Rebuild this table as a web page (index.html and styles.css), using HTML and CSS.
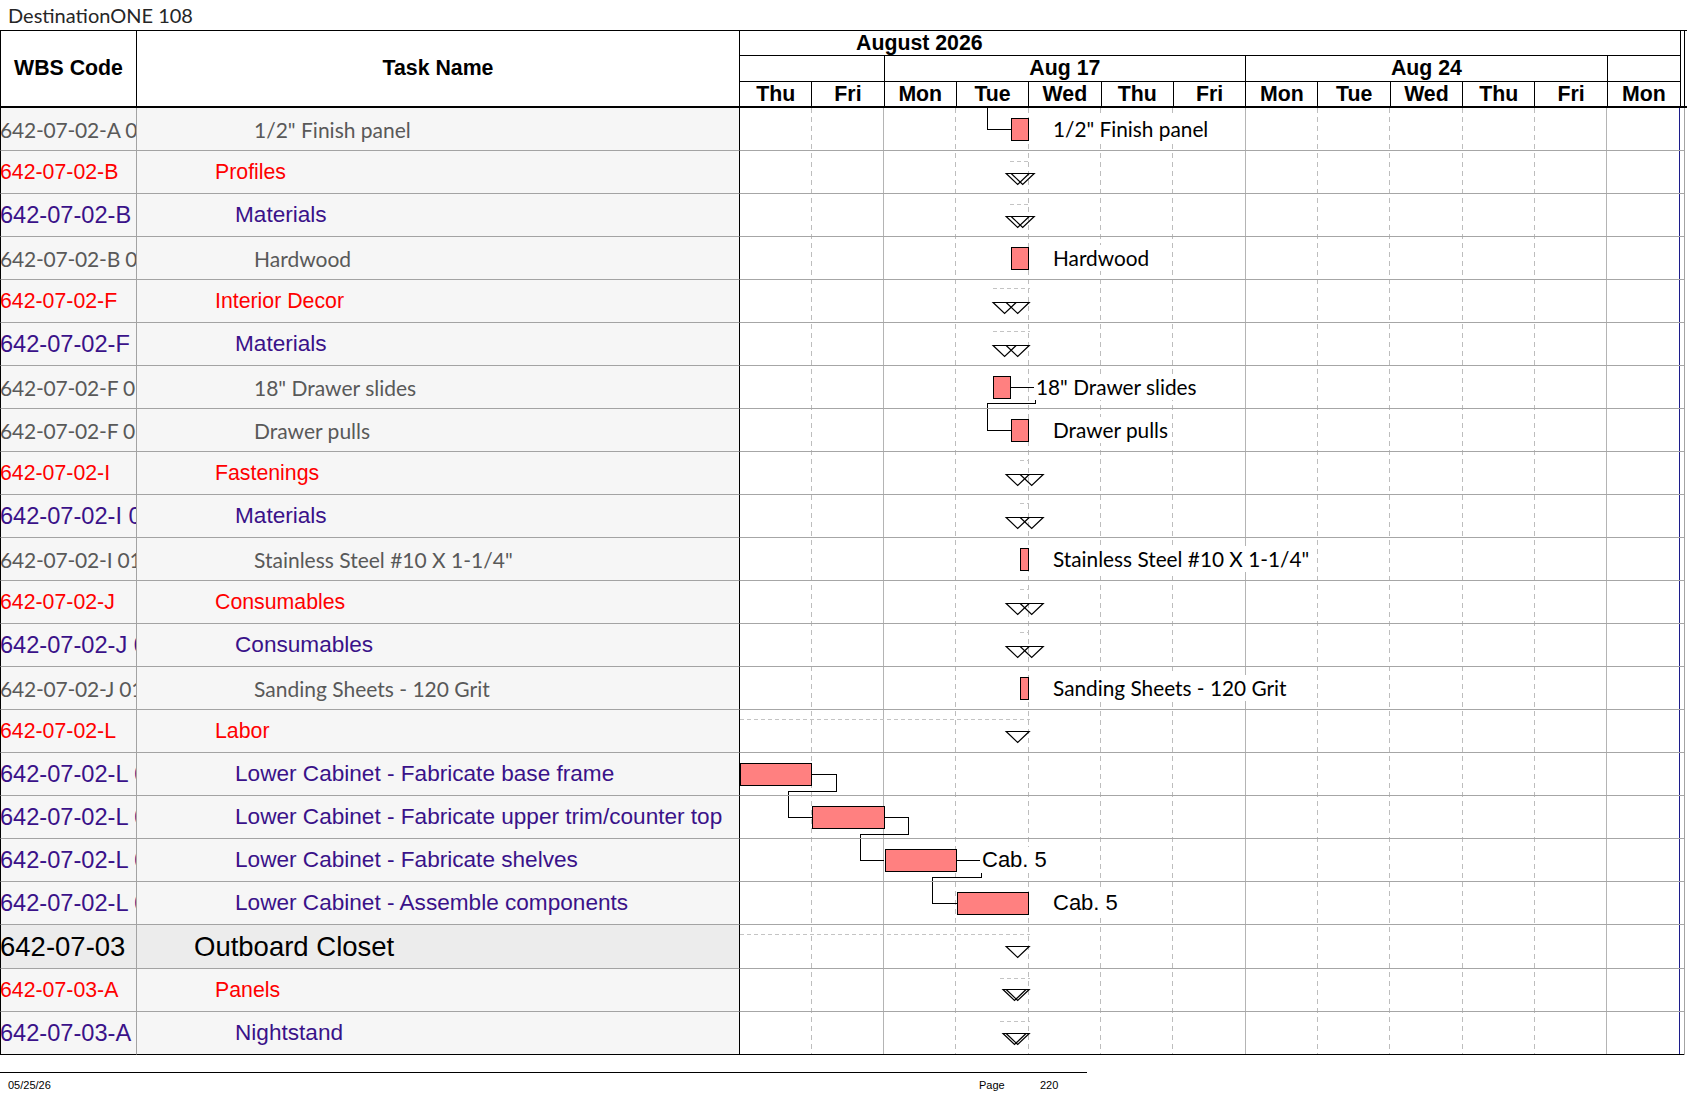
FILE: index.html
```html
<!DOCTYPE html>
<html>
<head>
<meta charset="utf-8">
<title>DestinationONE 108</title>
<link rel="stylesheet" href="styles.css">
</head>
<body>
<div class="title">DestinationONE 108</div>

<div class="head">
  <div class="h-wbs">WBS Code</div>
  <div class="h-task">Task Name</div>
  <div class="h-chart">
    <div class="h-month">August 2026</div>
    <div class="h-weeks">
      <div></div><div>Aug 17</div><div>Aug 24</div><div></div>
    </div>
    <div class="h-days">
      <div>Thu</div><div>Fri</div><div>Mon</div><div>Tue</div><div>Wed</div><div>Thu</div><div>Fri</div><div>Mon</div><div>Tue</div><div>Wed</div><div>Thu</div><div>Fri</div><div>Mon</div>
    </div>
  </div>
  <div class="h-gap"></div>
</div>

<div class="body">
  <div class="tbl">
    <div class="row leaf"><div class="wbs">642-07-02-A 01 01</div><div class="task">1/2" Finish panel</div></div>
    <div class="row l3"><div class="wbs">642-07-02-B</div><div class="task">Profiles</div></div>
    <div class="row l4"><div class="wbs">642-07-02-B 01</div><div class="task">Materials</div></div>
    <div class="row leaf"><div class="wbs">642-07-02-B 01 01</div><div class="task">Hardwood</div></div>
    <div class="row l3"><div class="wbs">642-07-02-F</div><div class="task">Interior Decor</div></div>
    <div class="row l4"><div class="wbs">642-07-02-F 01</div><div class="task">Materials</div></div>
    <div class="row leaf"><div class="wbs">642-07-02-F 01 01</div><div class="task">18" Drawer slides</div></div>
    <div class="row leaf"><div class="wbs">642-07-02-F 01 02</div><div class="task">Drawer pulls</div></div>
    <div class="row l3"><div class="wbs">642-07-02-I</div><div class="task">Fastenings</div></div>
    <div class="row l4"><div class="wbs">642-07-02-I 01</div><div class="task">Materials</div></div>
    <div class="row leaf"><div class="wbs">642-07-02-I 01 01</div><div class="task">Stainless Steel #10 X 1-1/4"</div></div>
    <div class="row l3"><div class="wbs">642-07-02-J</div><div class="task">Consumables</div></div>
    <div class="row l4"><div class="wbs">642-07-02-J 01</div><div class="task">Consumables</div></div>
    <div class="row leaf"><div class="wbs">642-07-02-J 01 01</div><div class="task">Sanding Sheets - 120 Grit</div></div>
    <div class="row l3"><div class="wbs">642-07-02-L</div><div class="task">Labor</div></div>
    <div class="row l4"><div class="wbs">642-07-02-L 01</div><div class="task">Lower Cabinet - Fabricate base frame</div></div>
    <div class="row l4"><div class="wbs">642-07-02-L 02</div><div class="task">Lower Cabinet - Fabricate upper trim/counter top</div></div>
    <div class="row l4"><div class="wbs">642-07-02-L 03</div><div class="task">Lower Cabinet - Fabricate shelves</div></div>
    <div class="row l4"><div class="wbs">642-07-02-L 04</div><div class="task">Lower Cabinet - Assemble components</div></div>
    <div class="row l2"><div class="wbs">642-07-03</div><div class="task">Outboard Closet</div></div>
    <div class="row l3"><div class="wbs">642-07-03-A</div><div class="task">Panels</div></div>
    <div class="row l4 last"><div class="wbs">642-07-03-A 01</div><div class="task">Nightstand</div></div>
  </div>

  <div class="chart">
    <svg class="canvas" width="944" height="947" viewBox="0 0 944 947" shape-rendering="crispEdges">
      <g class="grid-dash">
        <line x1="71.5" y1="0" x2="71.5" y2="947"/>
        <line x1="215.5" y1="0" x2="215.5" y2="947"/>
        <line x1="288.5" y1="0" x2="288.5" y2="947"/>
        <line x1="360.5" y1="0" x2="360.5" y2="947"/>
        <line x1="432.5" y1="0" x2="432.5" y2="947"/>
        <line x1="577.5" y1="0" x2="577.5" y2="947"/>
        <line x1="649.5" y1="0" x2="649.5" y2="947"/>
        <line x1="722.5" y1="0" x2="722.5" y2="947"/>
        <line x1="794.5" y1="0" x2="794.5" y2="947"/>
      </g>
      <g class="grid-week">
        <line x1="143.5" y1="0" x2="143.5" y2="947"/>
        <line x1="505.5" y1="0" x2="505.5" y2="947"/>
        <line x1="866.5" y1="0" x2="866.5" y2="947"/>
      </g>
      <line class="edge" x1="939.5" y1="0" x2="939.5" y2="947"/>

      <g class="sumline">
        <line x1="270" y1="53.5" x2="290" y2="53.5"/>
        <line x1="270" y1="96.5" x2="290" y2="96.5"/>
        <line x1="253" y1="180.5" x2="290" y2="180.5"/>
        <line x1="253" y1="223.5" x2="290" y2="223.5"/>
        <line x1="280" y1="352.5" x2="289" y2="352.5"/>
        <line x1="280" y1="395.5" x2="289" y2="395.5"/>
        <line x1="280" y1="481.5" x2="289" y2="481.5"/>
        <line x1="280" y1="524.5" x2="289" y2="524.5"/>
        <line x1="0" y1="611.5" x2="290" y2="611.5"/>
        <line x1="0" y1="826.5" x2="290" y2="826.5"/>
        <line x1="260" y1="870.5" x2="290" y2="870.5"/>
        <line x1="260" y1="913.5" x2="290" y2="913.5"/>
      </g>

      <g class="tri" shape-rendering="geometricPrecision">
        <polygon points="271.2,65.5 294.2,65.5 282.7,76.5"/>
        <polygon points="266.2,65.5 289.2,65.5 277.7,76.5"/>
        <polygon points="271.2,108.5 294.2,108.5 282.7,119.5"/>
        <polygon points="266.2,108.5 289.2,108.5 277.7,119.5"/>
        <polygon points="253.1,194.5 276.1,194.5 264.6,205.5"/>
        <polygon points="266.2,194.5 289.2,194.5 277.7,205.5"/>
        <polygon points="253.1,237.5 276.1,237.5 264.6,248.5"/>
        <polygon points="266.2,237.5 289.2,237.5 277.7,248.5"/>
        <polygon points="280.2,366.5 303.2,366.5 291.7,377.5"/>
        <polygon points="266.2,366.5 289.2,366.5 277.7,377.5"/>
        <polygon points="280.2,409.5 303.2,409.5 291.7,420.5"/>
        <polygon points="266.2,409.5 289.2,409.5 277.7,420.5"/>
        <polygon points="280.2,495.5 303.2,495.5 291.7,506.5"/>
        <polygon points="266.2,495.5 289.2,495.5 277.7,506.5"/>
        <polygon points="280.2,538.5 303.2,538.5 291.7,549.5"/>
        <polygon points="266.2,538.5 289.2,538.5 277.7,549.5"/>
        <polygon points="266.2,623.5 289.2,623.5 277.7,634.5"/>
        <polygon points="266.2,838.5 289.2,838.5 277.7,849.5"/>
        <polygon points="263,881.5 286,881.5 274.5,892.5"/>
        <polygon points="266.2,881.5 289.2,881.5 277.7,892.5"/>
        <polygon points="263,925.5 286,925.5 274.5,936.5"/>
        <polygon points="266.2,925.5 289.2,925.5 277.7,936.5"/>
      </g>

      <g class="link">
        <path d="M247.5,0 V21.5 H271"/>
        <path d="M271,279.5 H295.5 V295.5 H247.5 V322.5 H271"/>
        <path d="M72,666.5 H96.5 V683.5 H48.5 V709.5 H72"/>
        <path d="M144,709.5 H168.5 V726.5 H120.5 V752.5 H144"/>
        <path d="M216,752.5 H241.5 V769.5 H192.5 V795.5 H217"/>
      </g>
    </svg>

    <div class="crow"><div class="bar" style="left:271.2px;width:18px"></div><div class="lbl" style="left:311px">1/2" Finish panel</div></div>
    <div class="crow"></div>
    <div class="crow"></div>
    <div class="crow"><div class="bar" style="left:271.2px;width:18px"></div><div class="lbl" style="left:311px">Hardwood</div></div>
    <div class="crow"></div>
    <div class="crow"></div>
    <div class="crow"><div class="bar" style="left:253.1px;width:18.1px"></div><div class="lbl" style="left:294px">18" Drawer slides</div></div>
    <div class="crow"><div class="bar" style="left:271.2px;width:18px"></div><div class="lbl" style="left:311px">Drawer pulls</div></div>
    <div class="crow"></div>
    <div class="crow"></div>
    <div class="crow"><div class="bar" style="left:280.2px;width:9px"></div><div class="lbl" style="left:311px">Stainless Steel #10 X 1-1/4"</div></div>
    <div class="crow"></div>
    <div class="crow"></div>
    <div class="crow"><div class="bar" style="left:280.2px;width:9px"></div><div class="lbl" style="left:311px">Sanding Sheets - 120 Grit</div></div>
    <div class="crow"></div>
    <div class="crow"><div class="bar" style="left:0px;width:72.3px"></div></div>
    <div class="crow"><div class="bar" style="left:72.3px;width:72.3px"></div></div>
    <div class="crow"><div class="bar" style="left:144.6px;width:72.3px"></div><div class="lbl arial" style="left:240px">Cab. 5</div></div>
    <div class="crow"><div class="bar" style="left:216.9px;width:72.3px"></div><div class="lbl arial" style="left:311px">Cab. 5</div></div>
    <div class="crow big"></div>
    <div class="crow"></div>
    <div class="crow last"></div>
  </div>
</div>

<div class="footer">
  <span class="f-date">05/25/26</span>
  <span class="f-page">Page</span>
  <span class="f-num">220</span>
</div>
</body>
</html>
```

FILE: styles.css
```css
* { box-sizing: border-box; }

html, body {
  margin: 0;
  padding: 0;
  background: #fff;
}

body {
  width: 1687px;
  height: 1097px;
  overflow: hidden;
  font-family: "Liberation Sans", Arial, sans-serif;
  color: #000;
}

.title {
  height: 30px;
  padding-left: 8px;
  font-family: Lato, "Open Sans", sans-serif;
  font-weight: 400;
  font-size: 20px;
  line-height: 30px;
  color: #262626;
}

/* ---------- header ---------- */
.head {
  display: flex;
  height: 78px;
  border-top: 1px solid #000;
  border-bottom: 2px solid #000;
  font-weight: bold;
  font-size: 21.3px;
}

.h-wbs,
.h-task {
  display: flex;
  align-items: center;
  justify-content: center;
  border-right: 1px solid #000;
}

.h-wbs {
  width: 137px;
  border-left: 1px solid #000;
}

.h-task { width: 603px; }

.h-chart {
  width: 941px;
  border-right: 1px solid #000;
  display: flex;
  flex-direction: column;
}

.h-gap {
  width: 4px;
  border-right: 1px solid #000;
}

.h-month {
  height: 25px;
  border-bottom: 1px solid #000;
  padding-left: 116px;
  line-height: 25px;
}

.h-weeks {
  height: 26px;
  border-bottom: 1px solid #000;
  display: grid;
  grid-template-columns: 2fr 5fr 5fr 1fr;
}

.h-days {
  height: 24px;
  display: grid;
  grid-template-columns: repeat(13, 1fr);
}

.h-weeks > div,
.h-days > div {
  border-right: 1px solid #000;
  text-align: center;
}

.h-weeks > div:last-child,
.h-days > div:last-child { border-right: none; }

.h-weeks > div { line-height: 25px; }
.h-days > div { line-height: 24px; }

/* ---------- body ---------- */
.body { display: flex; }

.tbl { width: 740px; }

.row {
  display: flex;
  height: 43px;
}

.wbs,
.task {
  display: flex;
  align-items: center;
  white-space: nowrap;
  overflow: hidden;
  background: #f6f6f6;
  border-bottom: 1px solid #a3a3a3;
}

.wbs {
  width: 137px;
  border-left: 1px solid #000;
  border-right: 1px solid #a3a3a3;
  text-indent: -1px;
}

.task {
  width: 603px;
  border-right: 1px solid #000;
}

.row.last .wbs,
.row.last .task { border-bottom-color: #000; }

.row.leaf .wbs,
.row.leaf .task {
  font-family: Lato, "Open Sans", sans-serif;
  font-size: 21px;
  color: #595959;
}
.row.leaf .wbs { letter-spacing: -0.2px; }
.row.leaf .task { padding-left: 117px; }

.row.l3 .wbs,
.row.l3 .task {
  font-size: 21.3px;
  color: #ff0000;
}
.row.l3 .task { padding-left: 78px; }

.row.l4 .wbs,
.row.l4 .task {
  font-size: 22.6px;
  color: #3a1289;
}
.row.l4 .wbs { font-size: 23.6px; }
.row.l4 .task { padding-left: 98px; }

.row.l2 { height: 44px; }
.row.l2 .wbs,
.row.l2 .task {
  font-size: 27.5px;
  color: #000;
  background: #ececec;
}
.row.l2 .task { padding-left: 57px; }

/* ---------- gantt ---------- */
.chart {
  position: relative;
  width: 945px;
  border-right: 1px solid #a3a3a3;
}

.canvas {
  position: absolute;
  left: 0;
  top: 0;
  display: block;
}

.grid-dash line {
  stroke: #bdbdbd;
  stroke-width: 1;
  stroke-dasharray: 5 4;
}

.grid-week line {
  stroke: #b4b4b4;
  stroke-width: 1;
}

.edge {
  stroke: #1c1c8a;
  stroke-width: 1;
}

.sumline line {
  stroke: #c4c4c4;
  stroke-width: 1;
  stroke-dasharray: 4 3;
}

.tri polygon {
  fill: none;
  stroke: #000;
  stroke-width: 1.2;
}

.link path {
  fill: none;
  stroke: #000;
  stroke-width: 1;
}

.crow {
  position: relative;
  height: 43px;
  border-bottom: 1px solid #a6a6a6;
}

.crow.big { height: 44px; }
.crow.last { border-bottom-color: #000; }

.bar {
  position: absolute;
  top: 10px;
  height: 23px;
  background: #ff8080;
  border: 1px solid #000;
}

.lbl {
  position: absolute;
  top: 50%;
  transform: translateY(-50%);
  padding: 0 2px;
  background: #fff;
  line-height: 26px;
  white-space: nowrap;
  font-family: Lato, "Open Sans", sans-serif;
  font-size: 20.8px;
  color: #000;
}

.lbl.arial {
  font-family: "Liberation Sans", Arial, sans-serif;
  font-size: 22px;
}

/* ---------- footer ---------- */
.footer {
  margin-top: 17px;
  width: 1087px;
  border-top: 1px solid #000;
  padding-top: 6px;
  display: grid;
  grid-template-columns: 971px 61px auto;
  padding-left: 8px;
  font-size: 11px;
  line-height: 13px;
  color: #000;
}
```
